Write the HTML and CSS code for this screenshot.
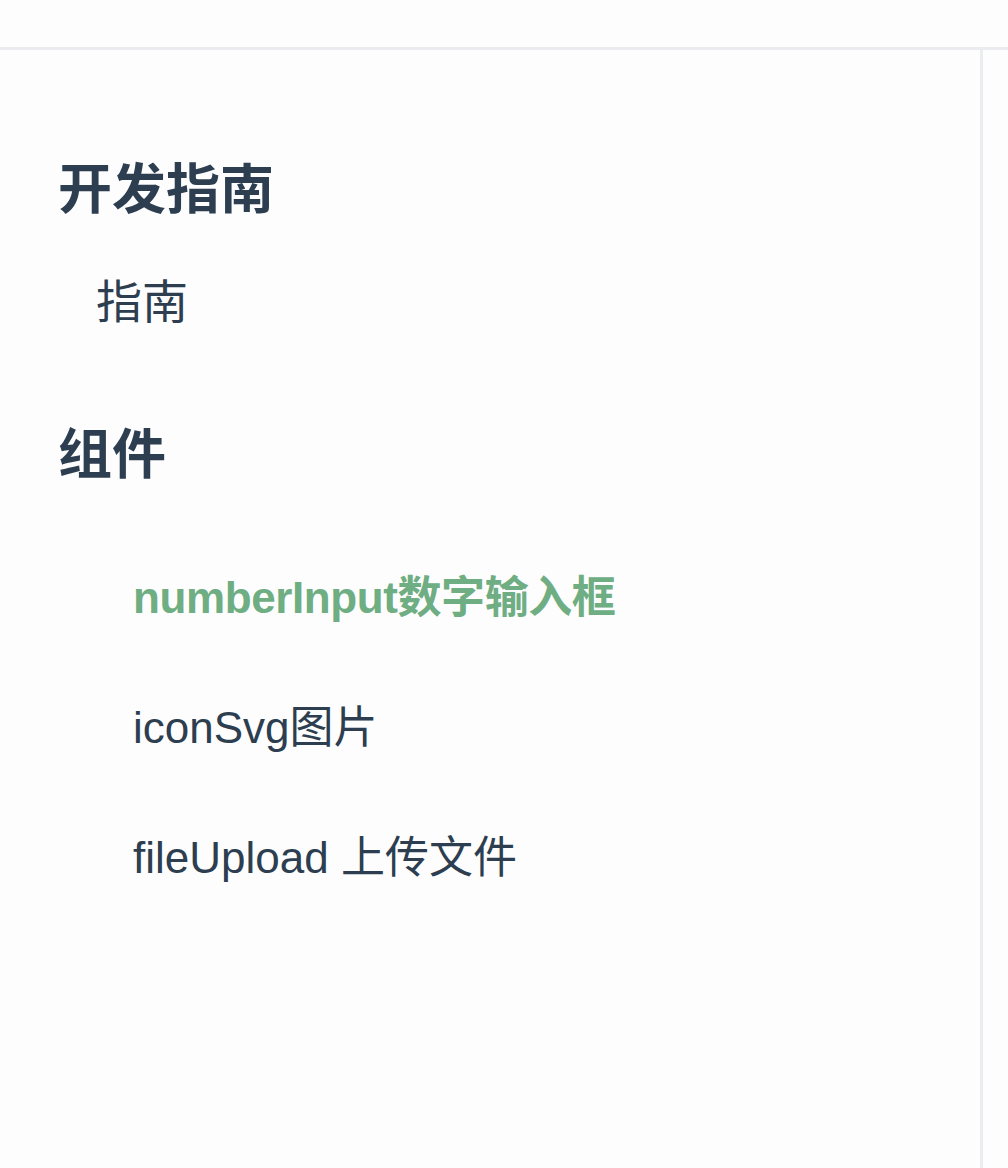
FILE: index.html
```html
<!DOCTYPE html>
<html lang="zh-CN">
<head>
    <meta charset="UTF-8">
    <meta name="viewport" content="width=device-width, initial-scale=1.0">
    <title>开发指南</title>
    <link rel="stylesheet" href="styles.css">
</head>
<body>
    <header class="navbar"></header>

    <aside class="sidebar">
        <section class="sidebar-group">
            <p class="sidebar-heading">开发指南</p>
            <ul class="sidebar-links">
                <li><a class="sidebar-link top-link" href="#">指南</a></li>
            </ul>
        </section>

        <section class="sidebar-group">
            <p class="sidebar-heading">组件</p>
            <ul class="sidebar-links sub-links">
                <li><a class="sidebar-link active" href="#">numberInput数字输入框</a></li>
                <li><a class="sidebar-link" href="#">iconSvg图片</a></li>
                <li><a class="sidebar-link" href="#">fileUpload 上传文件</a></li>
            </ul>
        </section>
    </aside>
</body>
</html>
```

FILE: styles.css
```css
html, body {
    margin: 0;
    height: 100%;
}
body {
    font-family: "Liberation Sans", "Noto Sans CJK SC", sans-serif;
    background: #fdfdfd;
    color: #2c3e50;
    display: flex;
    flex-direction: column;
}
.navbar {
    height: 47px;
    flex-shrink: 0;
    border-bottom: 3px solid #eaecef;
    background: #fdfdfd;
}
.sidebar {
    flex: 1;
    width: 980px;
    border-right: 3px solid #eaecef;
    padding-top: 100px;
    box-sizing: content-box;
}
.sidebar-group {
    padding-left: 58px;
}
.sidebar-heading {
    margin: 0;
    font-size: 54px;
    line-height: 80px;
    font-weight: bold;
    color: #2c3e50;
}
.sidebar-links {
    list-style: none;
    margin: 0;
    padding: 0;
}
.sidebar-link {
    display: block;
    color: #2c3e50;
    text-decoration: none;
}
.top-link {
    margin: 42px 0 83px 38px;
    font-size: 46px;
    line-height: 60px;
}
.sub-links {
    margin-top: 38px;
}
.sub-links .sidebar-link {
    padding: 35px 0 35px 75px;
    font-size: 44px;
    line-height: 60px;
}
.sidebar-link.active {
    color: #6fad83;
    font-weight: bold;
    letter-spacing: -0.4px;
}
```
